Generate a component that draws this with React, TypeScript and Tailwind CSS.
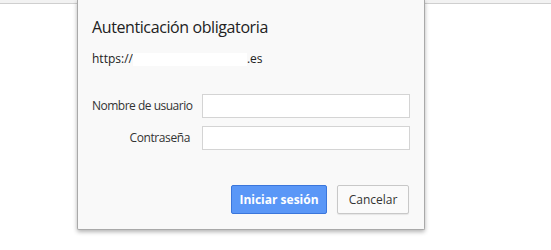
const font = { fontFamily: '"Open Sans", "Noto Sans", sans-serif' };

export default function App() {
  return (
    <div className="w-[551px] h-[250px] bg-white overflow-hidden" style={font}>
      {/* browser chrome strip */}
      <div className="h-[4px] bg-[#f2f2f2] border-b border-[#cfcfcf]" />

      {/* Auth dialog */}
      <div className="relative -mt-[4px] ml-[77px] w-[348px] h-[230px] bg-[#f9f9f9] border border-[#a9a9a9] border-t-0 rounded-b-[2px] shadow-[0_2px_4px_rgba(0,0,0,0.3)] flex flex-col pl-[14px] pr-[14px]">
        <h1 className="mt-[17px] text-[16px] leading-[20px] text-[#222] tracking-[-0.4px]">
          Autenticación obligatoria
        </h1>
        <div className="mt-[14px] flex items-center text-[12px] leading-[16px] text-[#222]">
          <span>https://</span>
          <span className="w-[114px] h-[13px] bg-white" />
          <span>.es</span>
        </div>

        <div className="mt-[27px] flex flex-col gap-[8px]">
          <div className="flex items-center gap-[12px]">
            <label className="w-[98px] shrink-0 text-right text-[12px] tracking-[-0.5px] text-[#333] whitespace-nowrap">Nombre de usuario</label>
            <input className="w-[208px] h-[24px] bg-white border border-[#d4d4d4] outline-none" />
          </div>
          <div className="flex items-center gap-[12px]">
            <label className="w-[98px] shrink-0 text-right text-[12px] tracking-[-0.4px] text-[#333] whitespace-nowrap">Contraseña</label>
            <input type="password" className="w-[208px] h-[24px] bg-white border border-[#d4d4d4] outline-none" />
          </div>
        </div>

        <div className="mt-[35px] flex justify-end gap-[10px] pr-[1px]">
          <button className="w-[96px] h-[29px] rounded-[2px] bg-[#5a97f7] border border-[#3b76db] text-white text-[12px] font-bold">
            Iniciar sesión
          </button>
          <button className="w-[72px] h-[29px] rounded-[2px] bg-[#fafafa] border border-[#c8c8c8] shadow-[0_1px_1px_rgba(0,0,0,0.08)] text-[#333] text-[12px]">
            Cancelar
          </button>
        </div>
      </div>
    </div>
  );
}
